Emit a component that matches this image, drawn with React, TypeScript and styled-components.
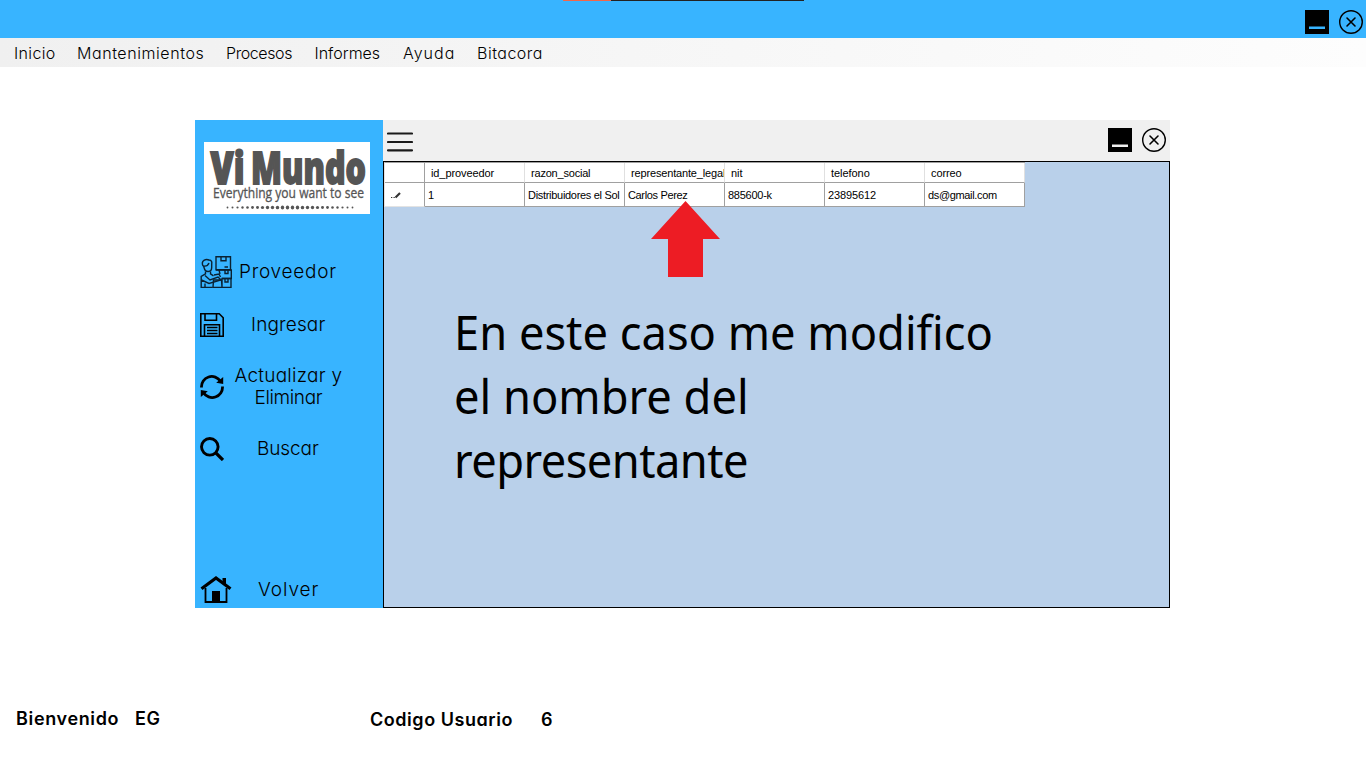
import React from "react";
import styled, { createGlobalStyle } from "styled-components";

const Global = createGlobalStyle`
  body { margin: 0; background: #fff; color: #000; }
  #root { height: 768px; overflow: hidden; }
`;

const gothic = `Inter, "Open Sans", sans-serif`;

const Screen = styled.div`
  width: 1366px;
  height: 768px;
  display: flex;
  flex-direction: column;
  font-family: ${gothic};
  font-feature-settings: "cv11" 1;
  overflow: hidden;
`;

const TitleBar = styled.header`
  position: relative;
  height: 38px;
  box-sizing: border-box;
  display: flex;
  justify-content: flex-end;
  gap: 10px;
  padding: 10px 3px 0 0;
  background: #38b4ff;
`;

const Progress = styled.div`
  position: absolute;
  top: 0;
  left: 563px;
  width: 241px;
  height: 1px;
  background: linear-gradient(to right, #f2674a 48px, #222 48px);
`;

const MenuBar = styled.nav`
  height: 29px;
  display: flex;
  background: linear-gradient(to right, #f0f0f0, #fdfdfd);
`;

const MenuItem = styled.span<{ $w: number; $ls: number }>`
  width: ${(p) => p.$w}px;
  font-size: 16px;
  font-weight: 300;
  line-height: 31px;
  letter-spacing: ${(p) => p.$ls}px;
  white-space: nowrap;
  &:first-child { margin-left: 14px; }
`;

const Window = styled.main`
  display: flex;
  width: 975px;
  height: 488px;
  margin: 53px 0 0 195px;
`;

const Sidebar = styled.aside`
  width: 188px;
  box-sizing: border-box;
  padding-top: 22px;
  display: flex;
  flex-direction: column;
  background: #38b4ff;
`;

const Logo = styled.div`
  width: 166px;
  height: 72px;
  margin: 0 0 34px 9px;
  background: #fff;
  svg { display: block; overflow: visible; }
`;

const SideButton = styled.div<{ $h: number; $mt?: number }>`
  display: flex;
  align-items: center;
  height: ${(p) => p.$h}px;
  margin-top: ${(p) => p.$mt || 0}px;
  padding-left: 5px;
  svg { flex: none; }
`;

const SideLabel = styled.span<{ $x: number }>`
  display: flex;
  flex-direction: column;
  align-items: center;
  margin-left: ${(p) => p.$x}px;
  font-size: 19px;
  font-weight: 300;
  line-height: 22px;
  white-space: nowrap;
`;

const LabelLine = styled.span<{ $ls: number }>`
  letter-spacing: ${(p) => p.$ls}px;
`;

const Content = styled.section`
  width: 787px;
  display: flex;
  flex-direction: column;
`;

const ToolBar = styled.div`
  height: 41px;
  display: flex;
  align-items: flex-start;
  gap: 10px;
  background: #f0f0f0;
  padding-right: 4px;
  > svg { margin-top: 8px; }
  > svg:first-child { margin: 11px auto 0 4px; }
`;

const GridPanel = styled.div`
  position: relative;
  flex: 1;
  box-sizing: border-box;
  border: 1px solid #000;
  background: #b9d0ea;
`;

const Table = styled.div`
  width: 640px;
  height: 44px;
  display: grid;
  grid-template-columns: 40px repeat(6, 100px);
  grid-template-rows: 20px 24px;
  border-top: 1px solid #a0a0a0;
  border-left: 1px solid #e3e3e3;
  font-family: "Liberation Sans", Arial, sans-serif;
  font-size: 11px;
`;

const Cell = styled.div<{ $head?: boolean; $side?: boolean; $ls?: number }>`
  box-sizing: border-box;
  overflow: hidden;
  background: #fff;
  white-space: nowrap;
  letter-spacing: ${(p) => p.$ls || 0}px;
  line-height: ${(p) => (p.$head ? 20 : 24)}px;
  padding-left: ${(p) => (p.$head ? 6 : p.$side ? 5 : 3)}px;
  border-right: 1px solid ${(p) => (p.$head && !p.$side ? "#e0e0e0" : "#a0a0a0")};
  border-bottom: 1px solid ${(p) => (p.$side && !p.$head ? "#e3e3e3" : "#a0a0a0")};
`;

const Arrow = styled.svg`
  position: absolute;
  left: 267px;
  top: 39px;
`;

const Note = styled.p`
  position: absolute;
  left: 70px;
  top: 138px;
  margin: 0;
  font-family: "Noto Sans", "Open Sans", sans-serif;
  font-size: 48px;
  line-height: 64px;
  font-variant-ligatures: none;
  white-space: nowrap;
  transform: scaleX(0.943);
  transform-origin: 0 0;
`;

const NoteLine = styled.span<{ $ls: number }>`
  display: block;
  letter-spacing: ${(p) => p.$ls}px;
`;

const StatusBar = styled.footer`
  display: flex;
  margin: 99px 0 0 16px;
  font-size: 18px;
  font-weight: 600;
  line-height: 24px;
`;

const StatusText = styled.span<{ $w: number; $dy?: number; $ls?: number }>`
  width: ${(p) => p.$w}px;
  padding-top: ${(p) => p.$dy || 0}px;
  letter-spacing: ${(p) => p.$ls || 0}px;
  white-space: nowrap;
`;

const MinimizeIcon = ({ bar }: { bar: string }) => (
  <svg width="24" height="24">
    <rect width="24" height="24" fill="#000" />
    <rect x="4" y="16.500" width="16" height="2.500" fill={bar} />
  </svg>
);

const CloseIcon = () => (
  <svg width="24" height="24" fill="none" stroke="#000">
    <circle cx="12" cy="12" r="11.300" strokeWidth="1.400" />
    <path d="M8 8l8 8M16 8l-8 8" strokeWidth="1.600" strokeLinecap="round" />
  </svg>
);

const MenuIcon = () => (
  <svg width="26" height="21" stroke="#1a1a1a" strokeWidth="2.200" strokeLinecap="round">
    <path d="M1 2.500h24M1 11h24M1 19.300h24" />
  </svg>
);

const SupplierIcon = () => (
  <svg width="32" height="32" viewBox="0 0 32 32" fill="none" stroke="#0a2233" strokeWidth="1.400">
    <path d="M16 .8h14.500v13H16zM21 .8v4h5v-4M24.500 11h3.500" />
    <path d="M19 14h12.300v8.500H22M25 14v3.500h3V14M16 14h3l1 4" />
    <path d="M22 22.500h9v9h-9zM25 22.500v3.500h3v-3.500M13.500 24h8l.5 7.500h-9z" />
    <path d="M3 10C.5 4.500 6 2.500 9 4c3 .3 3 2.500 2.700 4v3.500c0 5-6.500 5.500-7.500.5L3.500 10c2.500.5 4.500-.5 5.500-3" />
    <path d="M5.500 15.500v2.300L1.200 20.500v11h11.500M10.500 15.500v2.300l3 2M1.500 24l7.500 3.500 12-3.500-3-3-8 3-5-4.500M5 27.500v4M14 19l5-1 1.500 3" />
  </svg>
);

const SaveIcon = () => (
  <svg width="24" height="24" fill="none" stroke="#000" strokeWidth="1.600">
    <path d="M.8.8h18.400l4 4v18.400H.8zM5 .8v6.500h11.500V.8M4.500 23V11.800h15V23" />
    <path d="M7 14.500h10.500M7 17.500h10.500M7 20.500h10.500" strokeWidth="1.300" />
  </svg>
);

const RefreshIcon = () => (
  <svg width="24" height="24" fill="none" stroke="#000" strokeWidth="2.800">
    <path d="M1.500 12.500A10.300 10.300 0 0 1 20.500 6.300M22.500 11.500A10.300 10.300 0 0 1 3.500 17.700" />
    <path d="M23.200 2v7l-7-1.200zM.8 22v-7l7 1.200z" fill="#000" stroke="none" />
  </svg>
);

const SearchIcon = () => (
  <svg width="24" height="24" fill="none" stroke="#000">
    <circle cx="9.800" cy="9.800" r="8.300" strokeWidth="2.900" />
    <path d="M15.800 15.800l7.200 7.200" strokeWidth="3.300" />
  </svg>
);

const HomeIcon = () => (
  <svg width="32" height="28" viewBox="0 0 32 28">
    <path d="M5.500 12v14h21V12" fill="none" stroke="#000" strokeWidth="1.800" />
    <path d="M1.500 12.800L16 2l14.500 10.800" fill="none" stroke="#000" strokeWidth="3.200" />
    <path d="M22.500 2h3.500v8l-3.500-3zM12 15h8v12h-8z" />
  </svg>
);

const PencilIcon = () => (
  <svg width="12" height="8" viewBox="0 0 12 8">
    <path d="M1 6h1.300v1H1zM3.500 6h1.300v1H3.500z" fill="#333" />
    <path d="M5.500 6.500l4.500-4.500" stroke="#333" strokeWidth="2.100" />
  </svg>
);

const LogoArt = () => (
  <svg width="166" height="72" fill="#555">
    <g fontFamily="'Open Sans', sans-serif" fontWeight="800" fontSize="44" stroke="#555" strokeWidth="1.800">
      <text x="6.500" y="42" textLength="34" lengthAdjust="spacingAndGlyphs">Vi</text>
      <text x="47" y="42" textLength="115" lengthAdjust="spacingAndGlyphs">Mundo</text>
    </g>
    <text x="9" y="56" fontFamily="'Open Sans', sans-serif" fontSize="14.500" stroke="#555" strokeWidth=".3" textLength="151" lengthAdjust="spacingAndGlyphs">
      Everything you want to see
    </text>
    {Array.from({ length: 26 }, (_, i) => {
      const r = 2.1 - Math.abs(i - 12.5) * 0.095;
      return <ellipse key={i} cx={23.5 + i * 5} cy="65.500" rx={Math.min(r, 1.7)} ry={r} />;
    })}
  </svg>
);

const menu: [string, number, number][] = [
  ["Inicio", 63, 0.35],
  ["Mantenimientos", 149, 0.57],
  ["Procesos", 88.5, -0.4],
  ["Informes", 88.5, 0],
  ["Ayuda", 74, 1],
  ["Bitacora", 80, 0.5],
];

const heads: [string, number][] = [
  ["id_proveedor", -0.1], ["razon_social", -0.2], ["representante_legal", -0.16],
  ["nit", 0], ["telefono", -0.05], ["correo", -0.1],
];

const values: [string, number][] = [
  ["1", 0], ["Distribuidores el Sol", -0.3], ["Carlos Perez", -0.35],
  ["885600-k", -0.25], ["23895612", -0.1], ["ds@gmail.com", -0.35],
];

export default function App() {
  return (
    <Screen>
      <Global />
      <TitleBar>
        <Progress />
        <MinimizeIcon bar="#38b4ff" />
        <CloseIcon />
      </TitleBar>
      <MenuBar>
        {menu.map(([t, w, ls]) => <MenuItem key={t} $w={w} $ls={ls}>{t}</MenuItem>)}
      </MenuBar>
      <Window>
        <Sidebar>
          <Logo><LogoArt /></Logo>
          <SideButton $h={48}>
            <SupplierIcon />
            <SideLabel $x={7}><LabelLine $ls={0.75}>Proveedor</LabelLine></SideLabel>
          </SideButton>
          <SideButton $h={48} $mt={5}>
            <SaveIcon />
            <SideLabel $x={27}><LabelLine $ls={0.15}>Ingresar</LabelLine></SideLabel>
          </SideButton>
          <SideButton $h={48} $mt={14}>
            <RefreshIcon />
            <SideLabel $x={10.5}>
              <LabelLine $ls={0.25}>Actualizar y</LabelLine>
              <LabelLine $ls={-0.35}>Eliminar</LabelLine>
            </SideLabel>
          </SideButton>
          <SideButton $h={48} $mt={14}>
            <SearchIcon />
            <SideLabel $x={33}><LabelLine $ls={-0.1}>Buscar</LabelLine></SideLabel>
          </SideButton>
          <SideButton $h={34} $mt={100}>
            <HomeIcon />
            <SideLabel $x={26}><LabelLine $ls={0.95}>Volver</LabelLine></SideLabel>
          </SideButton>
        </Sidebar>
        <Content>
          <ToolBar>
            <MenuIcon />
            <MinimizeIcon bar="#f0f0f0" />
            <CloseIcon />
          </ToolBar>
          <GridPanel>
            <Table>
              <Cell $head $side />
              {heads.map(([t, ls]) => <Cell key={t} $head $ls={ls}>{t}</Cell>)}
              <Cell $side><PencilIcon /></Cell>
              {values.map(([t, ls]) => <Cell key={t} $ls={ls}>{t}</Cell>)}
            </Table>
            <Arrow width="69" height="76">
              <path d="M34.500 0L69 38H52v38H17V38H0z" fill="#ed1c24" />
            </Arrow>
            <Note>
              <NoteLine $ls={0}>En este caso me modifico</NoteLine>
              <NoteLine $ls={0}>el nombre del</NoteLine>
              <NoteLine $ls={-0.6}>representante</NoteLine>
            </Note>
          </GridPanel>
        </Content>
      </Window>
      <StatusBar>
        <StatusText $w={119} $ls={0.65}>Bienvenido</StatusText>
        <StatusText $w={235} $ls={0.5}>EG</StatusText>
        <StatusText $w={171} $dy={1} $ls={0.55}>Codigo Usuario</StatusText>
        <StatusText $w={20} $dy={1}>6</StatusText>
      </StatusBar>
    </Screen>
  );
}
